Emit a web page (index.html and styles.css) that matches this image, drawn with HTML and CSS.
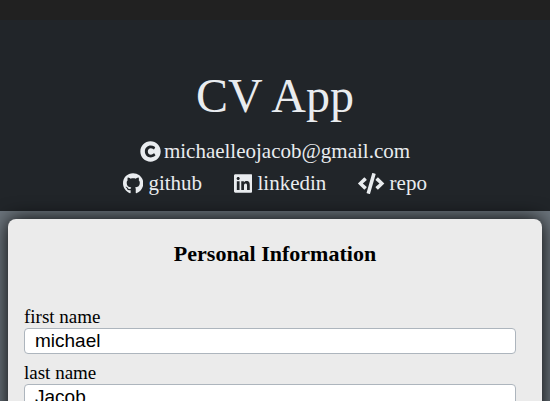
FILE: index.html
```html
<!DOCTYPE html>
<html lang="en">
<head>
<meta charset="utf-8">
<meta name="viewport" content="width=device-width, initial-scale=1">
<title>CV App</title>
<link rel="stylesheet" href="styles.css">
</head>
<body>
<header class="header">
  <h1 class="title">CV App</h1>
  <div class="contact">
    <a class="link link-mail" href="mailto:michaelleojacob@gmail.com">
      <svg class="icon" viewBox="0 0 512 512" aria-hidden="true"><path d="M256 8C119.033 8 8 119.033 8 256s111.033 248 248 248 248-111.033 248-248S392.967 8 256 8zm117.134 346.753c-1.592 1.867-39.776 45.731-109.851 45.731-84.692 0-144.484-63.26-144.484-145.567 0-81.303 62.004-143.401 143.762-143.401 66.957 0 101.965 37.315 103.422 38.904a12 12 0 0 1 1.238 14.623l-22.38 34.655c-4.049 6.267-12.774 7.351-18.234 2.295-.233-.214-26.529-23.88-61.88-23.88-46.116 0-73.916 33.575-73.916 76.082 0 39.602 25.514 79.692 74.277 79.692 38.697 0 65.28-28.338 65.544-28.625 5.132-5.565 14.059-5.033 18.508 1.053l24.547 33.572a12.001 12.001 0 0 1-.553 14.866z"/></svg>
      <span>michaelleojacob@gmail.com</span>
    </a>
    <nav class="links">
      <a class="link" href="#github">
        <svg class="icon" viewBox="0 0 496 512" aria-hidden="true"><path d="M165.900 397.400c0 2-2.300 3.600-5.200 3.600-3.300.3-5.600-1.300-5.600-3.600 0-2 2.300-3.600 5.200-3.600 3-.3 5.600 1.300 5.600 3.600zM244.800 8C106.100 8 0 113.300 0 252c0 110.900 69.800 205.800 169.500 239.200 12.800 2.300 17.300-5.600 17.300-12.100 0-6.200-.3-40.400-.3-61.400 0 0-70 15-84.700-29.800 0 0-11.400-29.100-27.800-36.600 0 0-22.900-15.700 1.600-15.400 0 0 24.900 2 38.600 25.800 21.900 38.600 58.600 27.500 72.900 20.900 2.300-16 8.800-27.100 16-33.700-55.900-6.200-112.300-14.300-112.300-110.500 0-27.500 7.600-41.300 23.600-58.900-2.600-6.500-11.100-33.300 2.600-67.900 20.900-6.500 69 27 69 27 20-5.600 41.500-8.500 62.800-8.500s42.800 2.900 62.800 8.500c0 0 48.100-33.600 69-27 13.700 34.700 5.200 61.400 2.600 67.900 16 17.700 25.800 31.500 25.800 58.900 0 96.500-58.900 104.200-114.800 110.500 9.200 7.900 17 22.900 17 46.400 0 33.700-.3 75.400-.3 83.600 0 6.500 4.600 14.400 17.300 12.100C428.200 457.800 496 362.900 496 252 496 113.300 383.500 8 244.800 8z"/></svg>
        <span>github</span>
      </a>
      <a class="link" href="#linkedin">
        <svg class="icon" viewBox="0 0 448 512" aria-hidden="true"><path d="M416 32H31.900C14.300 32 0 46.500 0 64.300v383.400C0 465.500 14.300 480 31.900 480H416c17.600 0 32-14.500 32-32.300V64.300c0-17.800-14.400-32.300-32-32.300zM135.400 416H69V202.200h66.500V416zm-33.200-243c-21.300 0-38.500-17.300-38.500-38.500S80.900 96 102.200 96c21.200 0 38.500 17.300 38.500 38.500 0 21.300-17.200 38.500-38.500 38.500zm282.100 243h-66.400V312c0-24.800-.5-56.700-34.500-56.700-34.600 0-39.900 27-39.900 54.900V416h-66.400V202.200h63.700v29.200h.9c8.900-16.800 30.600-34.500 62.900-34.500 67.200 0 79.700 44.300 79.700 101.900V416z"/></svg>
        <span>linkedin</span>
      </a>
      <a class="link" href="#repo">
        <svg class="icon" viewBox="0 0 640 512" aria-hidden="true"><path d="M278.900 511.500l-61-17.700c-6.400-1.800-10-8.500-8.200-14.900L346.200 8.700c1.800-6.400 8.500-10 14.900-8.200l61 17.700c6.400 1.800 10 8.500 8.200 14.900L293.800 503.300c-1.900 6.400-8.500 10.100-14.900 8.200zm-114-112.200l43.500-46.400c4.600-4.900 4.300-12.700-.8-17.200L117 256l90.600-79.700c5.100-4.500 5.500-12.300.8-17.200l-43.500-46.400c-4.500-4.800-12.100-5.100-17-.5L3.800 247.200c-5.100 4.700-5.100 12.800 0 17.500l144.100 135.100c4.900 4.600 12.500 4.400 17-.5zm327.200.6l144.100-135.100c5.100-4.700 5.100-12.800 0-17.500L492.100 112.100c-4.800-4.500-12.400-4.300-17 .5L431.600 159c-4.600 4.900-4.300 12.700.8 17.200L523 256l-90.600 79.700c-5.100 4.500-5.500 12.300-.8 17.200l43.500 46.400c4.500 4.900 12.100 5.100 17 .6z"/></svg>
        <span>repo</span>
      </a>
    </nav>
  </div>
</header>
<main class="main">
  <form class="card">
    <h2 class="heading">Personal Information</h2>
    <div class="field">
      <label for="first">first name</label>
      <input id="first" type="text" value="michael">
    </div>
    <div class="field">
      <label for="last">last name</label>
      <input id="last" type="text" value="Jacob">
    </div>
  </form>
</main>
</body>
</html>
```
FILE: styles.css
```css
* {
  box-sizing: border-box;
}

body {
  margin: 0;
  background: #6c757d;
  color: #000;
  font-family: "Liberation Serif", "Times New Roman", serif;
  font-size: 19px;
}

/* The page scrolls without a visible bar. */
html {
  scrollbar-width: none;
}

.header {
  padding: 68px 16px 12px;
  background: linear-gradient(#212121 20px, #212529 20px);
  color: #e9ecef;
  text-align: center;
}

.title {
  margin: 0 0 12px;
  font-size: 48px;
  font-weight: 400;
  line-height: 55px;
}

.contact {
  display: flex;
  flex-direction: column;
  align-items: center;
  font-size: 21px;
  line-height: 32px;
}

.links {
  display: flex;
  gap: 32px;
}

.link {
  display: flex;
  align-items: center;
  gap: 5px;
  color: inherit;
  text-decoration: none;
}

.link-mail {
  gap: 3px;
}

.icon {
  height: 21px;
  fill: currentColor;
}

.main {
  padding: 8px;
}

.card {
  padding: 16px;
  border-radius: 8px;
  background: #ebebeb;
  box-shadow: 0 0 20px #000;
}

.heading {
  margin: 6px 0 39px;
  font-size: 22px;
  line-height: 26px;
  text-align: center;
}

.field {
  display: flex;
  flex-direction: column;
  margin-bottom: 8px;
}

.field label {
  line-height: 22px;
}

.field input {
  width: 98%;
  height: 26px;
  padding: 0 10px;
  border: 1px solid #adb5bd;
  border-radius: 4px;
  background: #fff;
  color: #000;
  font-family: "Liberation Sans", Arial, sans-serif;
  font-size: 19px;
}
```
